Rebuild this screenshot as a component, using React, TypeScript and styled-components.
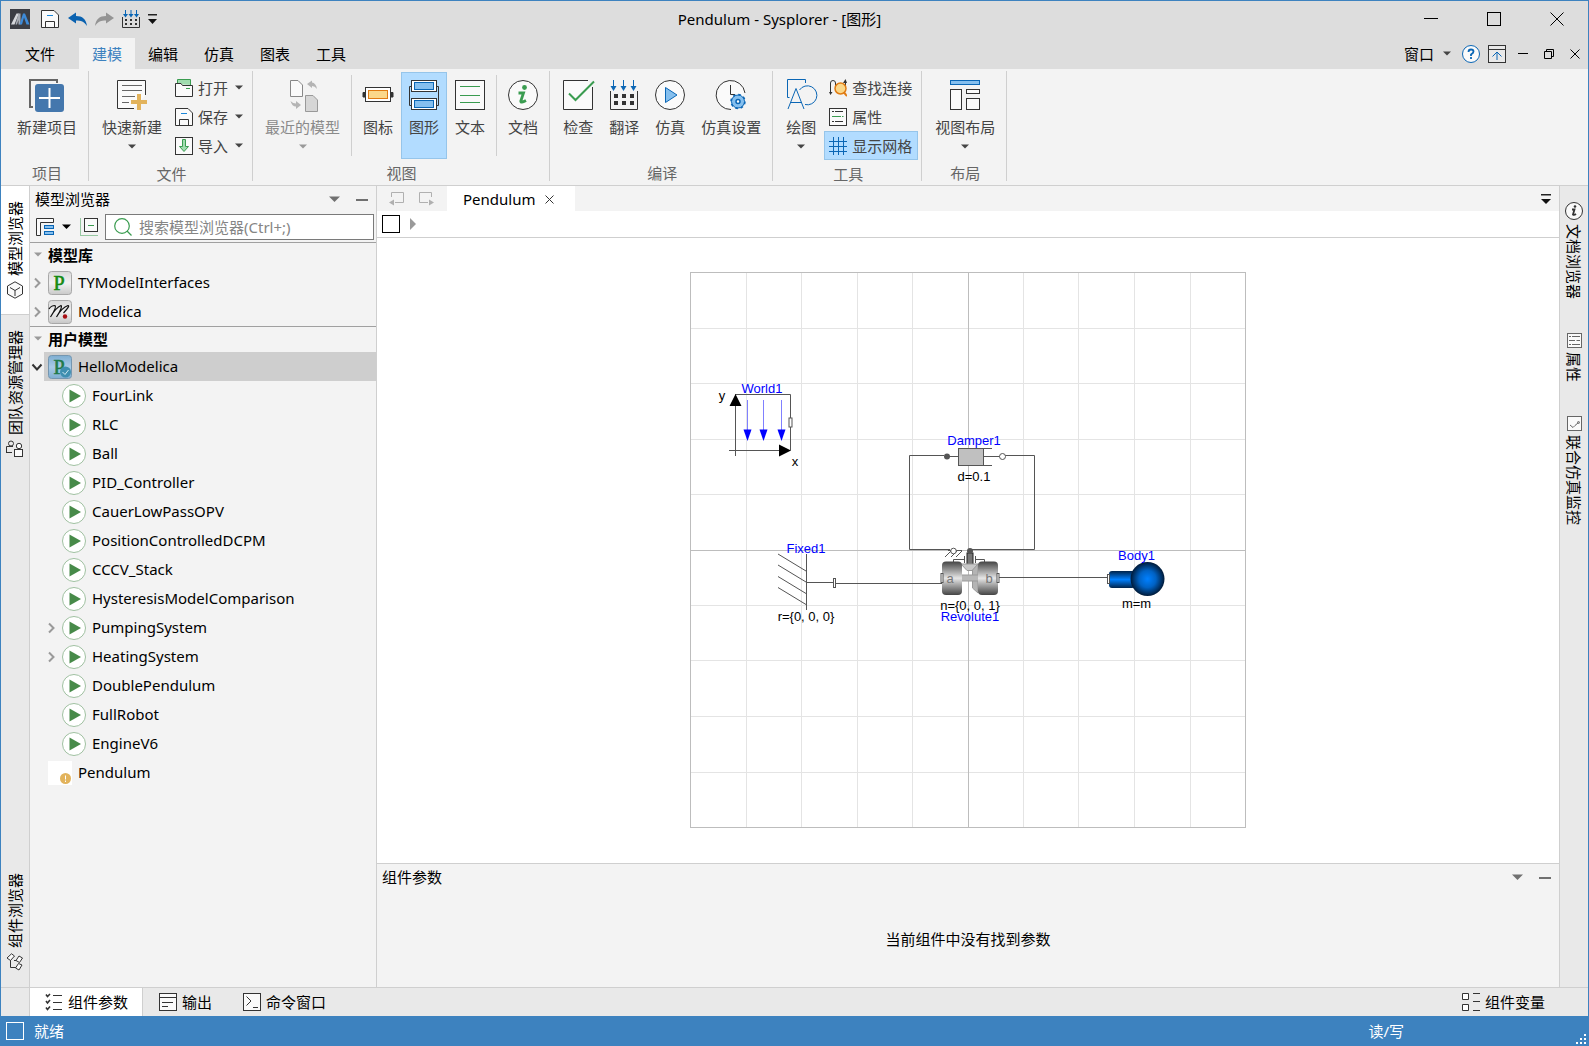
import React from 'react';
import styled, { createGlobalStyle, css } from 'styled-components';

const C = {
  accent: '#3d82bf',
  title: '#dddddd',
  panel: '#f3f3f3',
  rail: '#e9e9e9',
  line: '#cfcfcf',
  hot: '#b2dcff',
  hotLine: '#96c5ea',
  ink: '#333333',
  blue: '#0a66b5',
  sky: '#85bfee',
  green: '#3a9c50',
};

const Global = createGlobalStyle`
  * { box-sizing: border-box; }
  html, body, #root { height: 100%; }
  body { margin: 0; overflow: hidden; }
  body, button, input {
    font-family: "Noto Sans", "Noto Sans CJK SC", sans-serif;
    font-size: 15px;
    line-height: 20px;
    color: #000;
  }
  button { margin: 0; padding: 0; border: 0; background: none; white-space: nowrap; }
  svg { display: block; flex: none; }
  ul { list-style: none; margin: 0; padding: 0; }
`;

/* ---------- shell ---------- */
const Window = styled.div`
  height: 100vh;
  display: flex;
  flex-direction: column;
  border: solid ${C.accent};
  border-width: 1px 1px 0;
  background: ${C.panel};
`;
const TitleBar = styled.header`
  display: flex;
  height: 37px;
  background: ${C.title};
`;
const QuickBar = styled.div`
  width: 159px;
  padding: 0 0 1px 9px;
  display: flex;
  align-items: center;
  gap: 8px;
`;
const QuickButton = styled.button<{ $gap?: number }>`
  margin-left: ${(p) => p.$gap ?? 0}px;
`;
const Title = styled.h1`
  flex: 1;
  margin: 0;
  font-size: 15px;
  font-weight: 400;
  line-height: 37px;
  text-align: center;
`;
const WindowButton = styled.button`
  width: 63px;
  padding-bottom: 2px;
  display: grid;
  place-items: center;
`;
const MenuBar = styled.nav`
  display: flex;
  height: 31px;
  background: ${C.title};
`;
const MenuTab = styled.button<{ $active?: boolean; $wide?: boolean }>`
  padding: 0 ${(p) => (p.$wide ? 24 : 13)}px;
  height: 31px;
  color: ${(p) => (p.$active ? C.accent : '#000')};
  background: ${(p) => (p.$active ? C.panel : 'none')};
`;
const MenuRight = styled.div`
  margin-left: auto;
  padding-right: 4px;
  display: flex;
  align-items: center;
  gap: 8px;
`;
const MenuDrop = styled.button`
  display: flex;
  align-items: center;
  gap: 9px;
  padding: 0 3px;
`;
const DocButton = styled.button`
  width: 18px;
  display: grid;
  place-items: center;
`;

/* ---------- ribbon ---------- */
const Ribbon = styled.div`
  display: flex;
  height: 117px;
  padding: 2px 0 4px 3px;
  border-bottom: 1px solid ${C.line};
`;
const Group = styled.section`
  display: flex;
  flex-direction: column;
  padding: 1px 3px 0 5px;
  border-right: 1px solid ${C.line};
  & + & + & { padding-left: 4px; }
  & + & + & + & { padding-left: 5px; }
`;
const GroupBody = styled.div`
  display: flex;
  height: 88px;
`;
const GroupName = styled.h2`
  margin: 0;
  padding-top: 4px;
  font-size: 15px;
  font-weight: 400;
  text-align: center;
  color: #666;
`;
const hot = css`
  background: ${C.hot};
  border-color: ${C.hotLine};
`;
const BigButton = styled.button<{ $on?: boolean }>`
  height: 87px;
  padding: 5px 7px 0;
  border: 1px solid transparent;
  display: flex;
  flex-direction: column;
  align-items: center;
  color: #444;
  ${(p) => p.$on && hot}
  &:disabled { color: #8a8a8a; }
  & > svg:first-child { margin: 0 -3px; }
`;
const BigLabel = styled.span`
  margin: 3px 0 7px;
  white-space: nowrap;
`;
const Stack = styled.div`
  display: flex;
  flex-direction: column;
  padding-top: 1px;
`;
const SmallButton = styled.button<{ $on?: boolean }>`
  height: 29px;
  padding: 0 5px 0 4px;
  border: 1px solid transparent;
  display: flex;
  align-items: center;
  gap: 5px;
  color: #444;
  ${(p) => p.$on && hot}
  & > span + svg { margin-left: 2px; }
`;
const InnerLine = styled.div`
  width: 1px;
  height: 81px;
  margin: 3px 3px 0;
  background: ${C.line};
`;

/* ---------- work area ---------- */
const Work = styled.div`
  flex: 1;
  min-height: 0;
  display: grid;
  grid-template-columns: 29px 347px minmax(0, 1fr) 29px;
`;
const Rail = styled.nav<{ $right?: boolean }>`
  display: flex;
  flex-direction: column;
  background: ${C.rail};
  border: solid ${C.line};
  border-width: ${(p) => (p.$right ? '0 0 0 1px' : '0 1px 0 0')};
`;
const RailTab = styled.button<{ $active?: boolean; $end?: boolean }>`
  display: flex;
  flex-direction: column;
  align-items: center;
  gap: 5px;
  padding: 15px 0;
  margin-top: ${(p) => (p.$end ? 'auto' : '0')};
  background: ${(p) => (p.$active ? '#fff' : 'none')};
  border-bottom: 1px solid ${(p) => (p.$active ? C.line : 'transparent')};
`;
const SideText = styled.span<{ $up?: boolean }>`
  writing-mode: vertical-rl;
  text-orientation: sideways;
  ${(p) => p.$up && 'transform: rotate(180deg);'}
`;
const RightTab = styled(RailTab)`
  gap: 4px;
  padding: 16px 0 17px;
`;

const Side = styled.aside`
  display: flex;
  flex-direction: column;
  min-height: 0;
  border-right: 1px solid ${C.line};
`;
const PaneHead = styled.div`
  display: flex;
  align-items: center;
  height: 28px;
  padding: 0 8px 1px 5px;
`;
const PaneTitle = styled.h2`
  flex: 1;
  margin: 0;
  padding-bottom: 1px;
  font-size: 15px;
  font-weight: 400;
`;
const PaneButton = styled.button`
  width: 20px;
  height: 20px;
  display: grid;
  place-items: center;
  &:last-child { width: 24px; justify-items: end; }
`;
const SideTools = styled.div`
  display: flex;
  align-items: center;
  gap: 7px;
  height: 29px;
  padding: 0 2px 3px 6px;
  border-bottom: 1px solid #a0a0a0;
`;
const ToolDrop = styled.button`
  display: flex;
  align-items: center;
  gap: 8px;
  margin-right: 2px;
`;
const SearchBox = styled.label`
  flex: 1;
  min-width: 0;
  height: 26px;
  display: flex;
  align-items: center;
  gap: 7px;
  padding-left: 8px;
  background: #fff;
  border: 1px solid #7a7a7a;
`;
const SearchInput = styled.input`
  flex: 1;
  min-width: 0;
  padding: 0;
  border: 0;
  outline: 0;
  background: none;
  &::placeholder { color: #858585; opacity: 1; }
`;
const Section = styled.section`
  & + & { border-top: 1px solid #a0a0a0; }
`;
const SectionName = styled.h3`
  display: flex;
  align-items: center;
  gap: 6px;
  height: 25px;
  margin: 0;
  padding: 0 0 2px 4px;
  font-size: 15px;
  font-weight: 700;
`;
const Row = styled.li<{ $depth: number; $selected?: boolean }>`
  display: flex;
  align-items: center;
  height: 29px;
  padding-left: ${(p) => p.$depth * 14}px;
  background: ${(p) =>
    p.$selected ? 'linear-gradient(90deg, transparent 14px, #cecece 14px)' : 'none'};
`;
const Twist = styled.span`
  width: 14px;
  margin-right: 4px;
  display: grid;
  place-items: center;
`;
const RowButton = styled.button`
  display: flex;
  align-items: center;
  gap: 6px;
`;
const RowName = styled.span`
  padding-bottom: 2px;
`;

/* ---------- editor ---------- */
const Editor = styled.main`
  min-width: 0;
  display: flex;
  flex-direction: column;
  background: #fff;
`;
const TabStrip = styled.div`
  display: flex;
  align-items: center;
  height: 25px;
  padding: 0 8px 0 10px;
  gap: 12px;
  background: ${C.panel};
`;
const NavButton = styled.button`
  width: 18px;
  display: grid;
  place-items: center;
`;
const DocTab = styled.div`
  display: flex;
  align-items: center;
  align-self: stretch;
  gap: 10px;
  padding: 0 21px 0 16px;
  background: #fff;
`;
const CloseTab = styled.button`
  padding-top: 2px;
`;
const Push = styled.button`
  margin-left: auto;
`;
const Crumbs = styled.div`
  display: flex;
  align-items: center;
  gap: 10px;
  height: 27px;
  padding: 0 5px;
  border-bottom: 1px solid ${C.line};
`;
const Canvas = styled.div`
  flex: 1;
  min-height: 0;
  display: flex;
  align-items: center;
  justify-content: center;
  overflow: hidden;
`;
const Params = styled.section`
  height: 124px;
  display: flex;
  flex-direction: column;
  border-top: 1px solid ${C.line};
  background: ${C.panel};
`;
const Empty = styled.p`
  flex: 1;
  margin: 0;
  padding-bottom: 2px;
  display: grid;
  place-items: center;
`;

/* ---------- bottom ---------- */
const Bottom = styled.nav`
  display: flex;
  height: 29px;
  padding: 0 28px 0 29px;
  background: linear-gradient(${C.line}, ${C.line}) 28px 0 / 1px 100% no-repeat ${C.rail};
  border-top: 1px solid ${C.line};
`;
const BottomTab = styled.button<{ $active?: boolean; $end?: boolean }>`
  display: flex;
  align-items: center;
  gap: 5px;
  padding: 0 14px 0 15px;
  margin-left: ${(p) => (p.$end ? 'auto' : '0')};
  background: ${(p) => (p.$active ? '#fff' : 'none')};
  border-right: 1px solid ${(p) => (p.$active ? C.line : 'transparent')};
  & + & { padding-left: 16px; }
`;
const Status = styled.footer`
  display: flex;
  align-items: center;
  gap: 10px;
  height: 30px;
  padding: 0 2px 0 5px;
  color: #fff;
  background: ${C.accent};
`;
const Access = styled.span`
  margin-left: auto;
  margin-right: 162px;
`;
const GripBox = styled.span`
  align-self: flex-end;
  padding-bottom: 2px;
`;

/* ---------- icons ---------- */
type IconProps = { w?: number; h?: number; children: React.ReactNode };
const Icon = ({ w = 18, h = w, children }: IconProps) => (
  <svg width={w} height={h} viewBox={`0 0 ${w} ${h}`} fill="none" stroke={C.ink} aria-hidden="true">
    {children}
  </svg>
);
const Caret = ({ color = '#333', w = 8 }: { color?: string; w?: number }) => (
  <Icon w={w} h={Math.ceil(w / 2) + 1}>
    <path d={`M0 0.500H${w}L${w / 2} ${w / 2 + 0.5}Z`} fill={color} stroke="none" />
  </Icon>
);
const Dash = ({ w = 12, h = 2, color = '#707070' }) => (
  <Icon w={w} h={h}><rect width={w} height={h} fill={color} stroke="none" /></Icon>
);

const Logo = () => (
  <Icon w={20}>
    <rect width="20" height="20" fill="#3b3d44" stroke="none" />
    <path d="M1 15.500L6.500 4.500H9L4.500 15.500Z" fill="#d4d6da" stroke="none" />
    <path d="M5.500 15.500L8.500 4.500H10.500V15.500H8.500V11L7 15.500Z" fill="#a9aeb6" stroke="none" />
    <path d="M9.500 15.500L13 4.500H15L19.500 15.500H16.500L14 8.500L12 15.500Z" fill="#3d8ad8" stroke="none" />
  </Icon>
);
const SaveIcon = () => (
  <Icon>
    <path d="M.5 .5H13L17.500 5V17.500H.5Z" fill="#fafafa" />
    <path d="M4.500 17.500V11.500H13.500V17.500" />
    <path d="M6 5.500H12" stroke="#1b86d8" />
  </Icon>
);
const UndoIcon = () => (
  <Icon w={19} h={18}>
    <path d="M0 8L8 2.500V6C14.500 6 18 9 19 16C16 11.500 13 10.500 8 10.500V13.500Z" fill="#0a62b0" stroke="none" />
  </Icon>
);
const RedoIcon = () => (
  <Icon w={19} h={18}>
    <path d="M19 8L11 2.500V6C4.500 6 1 9 0 16C3 11.500 6 10.500 11 10.500V13.500Z" fill="#949494" stroke="none" />
  </Icon>
);
const QuickTranslateIcon = () => (
  <Icon>
    {[3.5, 9, 14.5].map((x) => (
      <g key={x}>
        <path d={`M${x} 0V6`} stroke={C.blue} />
        <path d={`M${x - 2.5} 4H${x + 2.5}L${x} 7.500Z`} fill={C.blue} stroke="none" />
      </g>
    ))}
    <path d="M.5 7V17.500H17.500V7" />
    {[3, 8, 13].map((x) => [9, 13].map((y) => (
      <rect key={`${x}${y}`} x={x} y={y} width="2" height="2" fill={C.ink} stroke="none" />
    )))}
  </Icon>
);
const MoreIcon = ({ w = 9 }) => (
  <Icon w={w} h={12}>
    <rect y="1" width={w} height="1.500" fill="#222" stroke="none" />
    <path d={`M0 6H${w}L${w / 2} 11Z`} fill="#111" stroke="none" />
  </Icon>
);

const NewProjectIcon = () => (
  <Icon w={36}>
    <path d="M4 29H1V2H28V5" stroke="#666" strokeWidth="2" />
    <rect x="6" y="6" width="29" height="28" rx="3" fill="#4477ad" stroke="none" />
    <path d="M20.500 10V30M10 20H31" stroke="#fff" strokeWidth="2" />
  </Icon>
);
const QuickNewIcon = () => (
  <Icon w={36}>
    <path d="M31.500 17V2.500H3.500V30.500H20" fill="#fafafa" />
    <path d="M8 7.500H28M8 12.500H28M8 18.500H21M8 24.500H15" stroke="#666" />
    <path d="M25 16V32M17 24H33" stroke="#e2b35c" strokeWidth="4" />
  </Icon>
);
const RecentIcon = () => (
  <Icon w={36}>
    <path d="M5.500 2.500H13L17.500 7V18.500H5.500Z" fill="#fafafa" stroke="#888" />
    <path d="M20.500 17.500H28L32.500 22V33.500H20.500Z" fill="#d6d6d6" stroke="#999" />
    <path d="M22 6L27 2.500V4.500Q31 5 32 11Q30 8 27 8V10Z" fill="#b4b4b4" stroke="none" />
    <path d="M16 27L11 31V28.500Q7 28.500 5.500 23Q8 25.500 11 25.500V23Z" fill="#b4b4b4" stroke="none" />
  </Icon>
);
const IconViewIcon = () => (
  <Icon w={36}>
    <path d="M3 14.500H5V19H3ZM31 14.500H33V19H31Z" fill={C.ink} />
    <rect x="5.500" y="9.500" width="25" height="14" fill="#fff" />
    <rect x="8.500" y="12.500" width="19" height="8" fill="#fbd88a" stroke="#e07b12" />
  </Icon>
);
const DiagramIcon = () => (
  <Icon w={36}>
    <path d="M5 8.500H3.500V27.500H5M31 8.500H32.500V27.500H31" />
    <rect x="5.500" y="2.500" width="25" height="11" fill="#fff" />
    <rect x="8.500" y="4.500" width="19" height="7" fill={C.sky} stroke={C.blue} />
    <rect x="5.500" y="20.500" width="25" height="11" fill="#fff" />
    <rect x="8.500" y="22.500" width="19" height="7" fill={C.sky} stroke={C.blue} />
  </Icon>
);
const TextIcon = () => (
  <Icon w={36}>
    <rect x="3.500" y="2.500" width="29" height="29" fill="#fafafa" />
    <path d="M8 8.500H28M8 17.500H28M8 24.500H28" stroke={C.green} />
  </Icon>
);
const DocIcon = () => (
  <Icon w={36}>
    <circle cx="18" cy="17" r="14.500" fill="#fafafa" />
    <circle cx="19.500" cy="9.500" r="2.400" fill={C.green} stroke="none" />
    <path d="M13.500 15H18.500L15.800 23Q15.500 25.500 21 22.500" stroke={C.green} strokeWidth="2.800" />
  </Icon>
);
const CheckIcon = () => (
  <Icon w={36}>
    <path d="M28 2.500H3.500V31.500H32.500V9" fill="#fafafa" />
    <path d="M9 15.500L15.500 22L34 3.500" stroke={C.green} strokeWidth="2" />
  </Icon>
);
const TranslateIcon = () => (
  <Icon w={36}>
    {[7.5, 17.5, 27.5].map((x) => (
      <g key={x}>
        <path d={`M${x} 2V10`} stroke={C.blue} />
        <path d={`M${x - 3} 8H${x + 3}L${x} 13Z`} fill={C.blue} stroke="none" />
      </g>
    ))}
    <path d="M4.500 13V31.500H31.500V13" />
    {[8, 16, 24].map((x) => [16, 23].map((y) => (
      <rect key={`${x}${y}`} x={x} y={y} width="4" height="4" fill={C.ink} stroke="none" />
    )))}
  </Icon>
);
const SimulateIcon = () => (
  <Icon w={36}>
    <circle cx="18" cy="17" r="14.500" fill="#fafafa" />
    <path d="M13.500 9.500L25 17L13.500 24.500Z" fill={C.sky} stroke={C.blue} />
  </Icon>
);
const SimSettingsIcon = () => (
  <Icon w={36}>
    <path d="M32 15A14.500 14.500 0 1 0 18 31.500" fill="#fafafa" />
    <path d="M17.500 7V16.500H22" />
    <circle cx="25" cy="23.500" r="6.500" fill={C.sky} stroke={C.blue} />
    <circle cx="25" cy="23.500" r="7" stroke={C.blue} strokeWidth="1.500" strokeDasharray="2.750 2.750" />
    <circle cx="25" cy="23.500" r="2" fill="#fff" stroke={C.blue} strokeWidth="1.500" />
  </Icon>
);
const DrawIcon = () => (
  <Icon w={36}>
    <g stroke={C.blue}>
      <path d="M6.500 19.500H4.500V1.500H22.500V5" />
      <path d="M16.500 12A9.500 9.500 0 1 1 22 26.500" />
      <path d="M5 31L13 10.500L21 31M8 24.500H18.500" />
    </g>
  </Icon>
);
const LayoutIcon = () => (
  <Icon w={36}>
    <rect x="3.500" y="2.500" width="29" height="4" fill={C.sky} stroke={C.blue} />
    <rect x="3.500" y="11.500" width="11" height="20" fill="#fafafa" />
    <rect x="19.500" y="11.500" width="13" height="4" fill="#fafafa" />
    <rect x="19.500" y="20.500" width="13" height="11" fill="#fafafa" />
  </Icon>
);
const OpenIcon = () => (
  <Icon>
    <path d="M2.500 5V.5H15.500V6" fill="#9fdcae" stroke={C.green} />
    <path d="M.5 4.500H6L7.500 6.500H17.500V17.500H.5Z" fill="#fafafa" />
    <path d="M11 9.500H15" stroke={C.green} />
  </Icon>
);
const ImportIcon = () => (
  <Icon>
    <rect x=".5" y=".5" width="17" height="17" fill="#fafafa" />
    <path d="M7.500 2.500H10.500V9.500H13.500L9 14.500L4.500 9.500H7.500Z" fill="#9fdcae" stroke={C.green} />
  </Icon>
);
const FindIcon = () => (
  <Icon>
    <path d="M1.500 14V4Q1.500 1.500 4 1.500Q6.500 1.500 6.500 4V12M16.500 3V9" />
    <path d="M0 13H3.500L1.500 16ZM14 4L16.500 0L18 4Z" fill={C.ink} stroke="none" />
    <circle cx="11.500" cy="9.500" r="5.500" fill="#fbd88a" stroke="#e07b12" strokeWidth="1.500" />
    <path d="M15 13.500L18 17" stroke="#e07b12" strokeWidth="2" />
  </Icon>
);
const PropIcon = () => (
  <Icon>
    <rect x=".5" y=".5" width="17" height="17" fill="#fafafa" />
    <path d="M3 3.500H5M6 3.500H14M3 13.500H5M6 13.500H14" />
    <path d="M3 8.500H12M13 8.500H14.500" stroke={C.green} />
  </Icon>
);
const GridIcon = () => (
  <Icon>
    <path d="M4.500 0V18M9.500 0V18M14.500 0V18M0 4.500H18M0 9.500H18M0 14.500H18" stroke={C.blue} />
  </Icon>
);

const TreeModeIcon = () => (
  <Icon>
    <path d="M.5 17.500V.5H17.500V4.500H4.500V17.500Z" fill="#fafafa" />
    <rect x="8.500" y="7.500" width="9" height="3" fill={C.sky} stroke={C.blue} />
    <rect x="8.500" y="13.500" width="9" height="3" fill={C.sky} stroke={C.blue} />
  </Icon>
);
const CollapseIcon = () => (
  <Icon>
    <path d="M.5 .5V17.500H18" stroke={C.green} strokeDasharray="1 1" />
    <rect x="4.500" y=".5" width="13" height="13" fill="#fafafa" />
    <path d="M8 7.500H14" stroke={C.green} />
  </Icon>
);
const SearchIcon = () => (
  <Icon>
    <circle cx="8" cy="8" r="7.300" stroke={C.green} strokeWidth="1.200" />
    <path d="M13 13L17.500 17.500" stroke={C.green} strokeWidth="1.200" />
  </Icon>
);
const Chevron = ({ open }: { open?: boolean }) => (
  <Icon w={12}>
    {open
      ? <path d="M1.500 3.500L6 8.500L10.500 3.500" stroke="#333" strokeWidth="2" />
      : <path d="M4 1.500L8.500 6L4 10.500" stroke="#9a9a9a" strokeWidth="2" />}
  </Icon>
);
const PackageIcon = ({ user }: { user?: boolean }) => (
  <Icon w={24}>
    <defs>
      <linearGradient id={user ? 'pkUser' : 'pkLib'} x1="0" y1="0" x2="0" y2="1">
        <stop offset="0" stopColor={user ? '#7eaed2' : '#dadada'} />
        <stop offset=".5" stopColor={user ? '#a9cbe6' : '#f1f1f1'} />
        <stop offset="1" stopColor={user ? '#7eaed2' : '#c9c9c9'} />
      </linearGradient>
    </defs>
    <rect x=".5" y=".5" width="23" height="23" rx="3" fill={`url(#${user ? 'pkUser' : 'pkLib'})`} stroke={user ? '#7596b0' : '#a8a8a8'} />
    <text x="11" y="19" textAnchor="middle" fontFamily="Liberation Serif, serif" fontSize="20" fontWeight="400" fill={user ? '#1f7a4a' : '#128a12'} stroke={user ? '#1f7a4a' : '#128a12'} strokeWidth=".6">P</text>
    {user && (
      <>
        <circle cx="17.500" cy="17" r="5.500" fill="#3f8fb0" stroke="none" />
        <path d="M14.500 17L17 19.500L20.500 15" stroke="#cfe8f2" />
      </>
    )}
  </Icon>
);
const ModelicaIcon = () => (
  <Icon w={24}>
    <defs>
      <linearGradient id="mdLib" x1="0" y1="0" x2="0" y2="1">
        <stop offset="0" stopColor="#d8d8d8" />
        <stop offset=".5" stopColor="#f1f1f1" />
        <stop offset="1" stopColor="#c6c6c6" />
      </linearGradient>
    </defs>
    <rect x=".5" y=".5" width="23" height="23" rx="3" fill="url(#mdLib)" stroke="#a8a8a8" />
    <path d="M1 9Q3 5.500 7 5.500Q9 7 2.500 17Q8 7.500 13 5.500Q15 6.500 8.500 17Q14 7.500 20 5.500Q22.500 5.500 15.500 13" stroke="#111" strokeWidth="1.200" />
    <circle cx="17" cy="16.500" r="2.200" fill="#a80f14" stroke="none" />
  </Icon>
);
const ModelIcon = () => (
  <Icon w={24}>
    <circle cx="12" cy="12" r="11.500" fill="#fff" stroke="#9fc0a0" />
    <path d="M7.500 5.500L19 12L7.500 18.500Z" fill="#478a49" stroke="none" />
  </Icon>
);
const PendingIcon = () => (
  <Icon w={24}>
    <rect width="24" height="24" fill="#fff" stroke="none" />
    <circle cx="17.500" cy="17.500" r="5.500" fill="#e2b35c" stroke="none" />
    <path d="M17.500 14.500V18.500M17.500 19.500V21" stroke="#fff" />
  </Icon>
);

const CubeIcon = () => (
  <Icon>
    <path d="M9 .8L16.500 5V13L9 17.200L1.500 13V5Z" fill="#fafafa" />
    <path d="M4 6.500L9 9.500L14 6.500M9 9.500V15" />
  </Icon>
);
const TeamIcon = () => (
  <Icon>
    <circle cx="5" cy="3.500" r="2.500" /><path d="M.5 13V6.500H7M.5 12.500H6" />
    <circle cx="13" cy="6" r="2.700" fill="#fafafa" /><rect x="8.500" y="9.500" width="8" height="7" fill="#fafafa" />
  </Icon>
);
const ComponentsIcon = () => (
  <Icon>
    <path d="M4.500 6V14.500H10M8 7.500H11" />
    <path d="M5.500 .8L8.500 3L4.500 7.500L1 5ZM13 3L16.500 5L13.500 9.500L10 7.500ZM12.500 10.500L16 12L13 17L9.500 15Z" fill="#fafafa" />
  </Icon>
);
const InfoIcon = () => (
  <Icon>
    <circle cx="9" cy="9" r="8.500" fill="#fafafa" />
    <circle cx="10" cy="4.500" r="1.300" fill={C.ink} stroke="none" />
    <path d="M7 7.500H9.500L8 12.500Q9 13.500 11 12" strokeWidth="1.800" />
  </Icon>
);
const PropSideIcon = () => (
  <Icon w={15}>
    <rect x=".5" y=".5" width="14" height="14" fill="#fafafa" stroke="#666" />
    <path d="M2 3.500H4M5 3.500H13M2 7.500H8M9.500 7.500H13M2 11.500H4M5 11.500H13" stroke="#666" />
  </Icon>
);
const MonitorIcon = () => (
  <Icon w={15}>
    <rect x=".5" y=".5" width="14" height="14" fill="#fafafa" stroke="#666" />
    <path d="M3 9L6 11.500L8 9.500L11.500 6.500" stroke="#666" />
    <circle cx="11.500" cy="6.500" r="1" stroke="#666" />
  </Icon>
);
const ListIcon = () => (
  <Icon>
    <path d="M8 2.500H17M8 9.500H17M8 16.500H17" />
    <path d="M1 1.500L2.500 3.500L5 1M1 8L2.500 10L5 7M1 14.500L2.500 16.500L5 13.500" strokeWidth="1.600" />
  </Icon>
);
const OutputIcon = () => (
  <Icon>
    <rect x=".5" y=".5" width="17" height="17" fill="#fafafa" />
    <path d="M0 4.500H18M3 9.500H14M3 13.500H9" />
  </Icon>
);
const ConsoleIcon = () => (
  <Icon>
    <rect x=".5" y=".5" width="17" height="17" fill="#fafafa" />
    <path d="M3.500 3.500L8 8L3.500 12.500M10 14.500H15" />
  </Icon>
);
const VarsIcon = () => (
  <Icon>
    <path d="M.5 .5H6.500V6.500H.5ZM.5 11.500H6.500V17.500H.5Z" fill="#fff" />
    <path d="M11 .5H18M11 8.500H18M11 17.500H18" />
  </Icon>
);
const NavIcon = ({ forward }: { forward?: boolean }) => (
  <Icon w={15}>
    <g stroke="#b0b0b0" transform={forward ? 'translate(15 0) scale(-1 1)' : undefined}>
      <path d="M2.500 6V1.500H14.500V11.500H6" />
      <path d="M5 8.500V14.500L0 11.500Z" fill="#b0b0b0" stroke="none" />
    </g>
  </Icon>
);
const CloseIcon = ({ w = 10, color = '#000' }) => (
  <Icon w={w}><path d={`M.5 .5L${w - 0.5} ${w - 0.5}M${w - 0.5} .5L.5 ${w - 0.5}`} stroke={color} /></Icon>
);
const HelpIcon = () => (
  <Icon>
    <circle cx="9" cy="9" r="8.500" fill="#fafafa" stroke={C.blue} />
    <path d="M6.500 7Q6.500 4.500 9 4.500Q11.500 4.500 11.500 6.500Q11.500 8 9 9.500V11" stroke={C.blue} strokeWidth="1.800" />
    <path d="M9 12V14" stroke={C.blue} strokeWidth="1.800" />
  </Icon>
);
const PinIcon = () => (
  <Icon>
    <rect x=".5" y=".5" width="17" height="17" fill="#e9e9e9" />
    <path d="M0 4.500H18" />
    <path d="M9 15V7.500M4.500 11.500L9 7L13.500 11.500" stroke={C.blue} />
  </Icon>
);

/* ---------- diagram ---------- */
const Sheet = styled.svg`
  font-family: "Liberation Sans", Arial, sans-serif;
  font-size: 13px;
  text { stroke: none; fill: #000; text-anchor: middle; }
  text.name { fill: #0000ff; }
  text.port { fill: #777; }
`;
const ticks = [56, 111, 167, 222, 333, 388, 444, 500];

const Diagram = () => (
  <Sheet width="556" height="557" viewBox="0 0 556 557" fill="none" stroke="#555" role="img" aria-label="Pendulum">
    <defs>
      <linearGradient id="steel" x1="0" y1="0" x2="0" y2="1">
        <stop offset="0" stopColor="#444" /><stop offset=".5" stopColor="#e6e6e6" /><stop offset="1" stopColor="#444" />
      </linearGradient>
      <linearGradient id="rod" x1="0" y1="0" x2="0" y2="1">
        <stop offset="0" stopColor="#00234a" /><stop offset=".5" stopColor="#0080ff" /><stop offset="1" stopColor="#00234a" />
      </linearGradient>
      <radialGradient id="ball">
        <stop offset="0" stopColor="#0080ff" /><stop offset=".5" stopColor="#0062c4" /><stop offset="1" stopColor="#001a38" />
      </radialGradient>
    </defs>
    {ticks.map((t) => <path key={t} d={`M${t + 0.5} 0V556M0 ${t + 0.5}H556`} stroke="#e4e4e4" />)}
    <path d="M278.500 0V556M0 278.500H556" stroke="#bdbdbd" />
    <rect x=".5" y=".5" width="555" height="555" stroke="#bdbdbd" />

    {/* World1 */}
    <path d="M45.500 122.500H100.500V178.500" />
    <path d="M45.500 122V184M39 178.500H100" />
    <path d="M45.500 122L51.500 134H39.500ZM101 178.500L89 172.500V184.500Z" fill="#000" stroke="none" />
    {[57.5, 73.5, 91.5].map((x) => (
      <g key={x}>
        <path d={`M${x} 128V160`} stroke="#8080ff" />
        <path d={`M${x - 4} 157.500H${x + 4}L${x} 169Z`} fill="#0000ff" stroke="none" />
      </g>
    ))}
    <rect x="99" y="146" width="3" height="9" fill="#fff" />
    <text className="name" x="72" y="121">World1</text>
    <text x="32" y="128">y</text>
    <text x="105" y="194">x</text>

    {/* Fixed1 */}
    <path d="M116.500 282V338M88 282L116 299M88 293L116 310M88 304.500L116 321.500M88 315.500L116 332.500M116 310.500H143" />
    <path d="M146 311.500H252" />
    <rect x="143.500" y="306.500" width="2" height="9" fill="#fff" />
    <text className="name" x="116" y="281">Fixed1</text>
    <text x="116" y="349">r={'{'}0, 0, 0{'}'}</text>

    {/* Damper1 */}
    <path d="M254 183.500H219.500V277.500H260M315 183.500H344.500V277.500H281" />
    <path d="M257 184.500H268M293 184.500H310M268 176.500H302M268 193.500H302" />
    <rect x="268.500" y="176.500" width="25" height="17" fill="#c0c0c0" />
    <circle cx="257" cy="184.500" r="3" fill="#555" stroke="none" />
    <circle cx="312.500" cy="184.500" r="3" fill="#fff" />
    <text className="name" x="284" y="173">Damper1</text>
    <text x="284" y="209">d=0.1</text>

    {/* Revolute1 */}
    <path d="M258 278.500H272M261 279L255 285M267 279L261 285M272 279L266 285" />
    <circle cx="263.500" cy="279" r="2.800" fill="#fff" />
    <path d="M263.500 290V287.500H274M274.500 284V291M285.500 284V291M286 287.500H294.500V290" />
    <rect x="277" y="281" width="6" height="12" fill="#777" stroke="#222" />
    <circle cx="280" cy="279" r="3" fill="#555" stroke="none" />
    <path d="M271 292H289L283 298.500H277Z" fill="#c8c8c8" stroke="#999" />
    <path d="M288 292V321L282.500 316V298Z" fill="#b4b4b4" stroke="#999" />
    <rect x="270" y="303" width="19" height="6" fill="#b8b8b8" stroke="#999" />
    <rect x="252" y="289.500" width="20" height="33.500" rx="4" fill="url(#steel)" stroke="none" />
    <rect x="288" y="289.500" width="20" height="33.500" rx="4" fill="url(#steel)" stroke="none" />
    <rect x="251" y="301.500" width="2" height="9" fill="#fff" />
    <rect x="307" y="301.500" width="2" height="9" fill="#fff" />
    <text className="port" x="260" y="311">a</text>
    <text className="port" x="299" y="311">b</text>
    <text x="280" y="338">n={'{'}0, 0, 1{'}'}</text>
    <text className="name" x="280" y="349">Revolute1</text>

    {/* Body1 */}
    <path d="M309 305.500H418" />
    <rect x="419" y="299" width="26" height="17" rx="3" fill="url(#rod)" stroke="none" />
    <circle cx="457.500" cy="307" r="17" fill="url(#ball)" stroke="none" />
    <rect x="417.500" y="302.500" width="2" height="9" fill="#fff" />
    <text className="name" x="446.500" y="288">Body1</text>
    <text x="446.500" y="336">m=m</text>
  </Sheet>
);

/* ---------- composed parts ---------- */
type BigProps = { icon: React.ReactNode; label: string; on?: boolean; drop?: boolean; disabled?: boolean };
const Big = ({ icon, label, on, drop, disabled }: BigProps) => (
  <BigButton $on={on} disabled={disabled}>
    {icon}
    <BigLabel>{label}</BigLabel>
    {drop && <Caret color={disabled ? '#999' : '#444'} />}
  </BigButton>
);
type SmallProps = { icon: React.ReactNode; label: string; on?: boolean; drop?: boolean };
const Small = ({ icon, label, on, drop }: SmallProps) => (
  <SmallButton $on={on}>
    {icon}
    <span>{label}</span>
    {drop && <Caret color="#444" />}
  </SmallButton>
);
type NodeProps = { name: string; icon: React.ReactNode; depth: number; twist?: 'open' | 'closed'; selected?: boolean };
const Node = ({ name, icon, depth, twist, selected }: NodeProps) => (
  <Row $depth={depth} $selected={selected}>
    <Twist>{twist && <Chevron open={twist === 'open'} />}</Twist>
    <RowButton>{icon}<RowName>{name}</RowName></RowButton>
  </Row>
);

const models = [
  'FourLink', 'RLC', 'Ball', 'PID_Controller', 'CauerLowPassOPV', 'PositionControlledDCPM', 'CCCV_Stack',
  'HysteresisModelComparison', 'PumpingSystem', 'HeatingSystem', 'DoublePendulum', 'FullRobot', 'EngineV6',
];
const folders = ['PumpingSystem', 'HeatingSystem'];

export default function App() {
  return (
    <Window lang="zh-CN">
      <Global />
      <TitleBar>
        <QuickBar>
          <Logo />
          <QuickButton $gap={3} aria-label="保存"><SaveIcon /></QuickButton>
          <QuickButton $gap={1} aria-label="撤销"><UndoIcon /></QuickButton>
          <QuickButton aria-label="重做"><RedoIcon /></QuickButton>
          <QuickButton aria-label="翻译"><QuickTranslateIcon /></QuickButton>
          <QuickButton aria-label="更多"><MoreIcon /></QuickButton>
        </QuickBar>
        <Title>Pendulum - Sysplorer - [图形]</Title>
        <WindowButton aria-label="最小化"><Dash w={14} h={1} color="#000" /></WindowButton>
        <WindowButton aria-label="最大化">
          <Icon w={14}><rect x=".5" y=".5" width="13" height="13" stroke="#000" /></Icon>
        </WindowButton>
        <WindowButton aria-label="关闭"><CloseIcon w={14} /></WindowButton>
      </TitleBar>

      <MenuBar>
        <MenuTab $wide>文件</MenuTab>
        <MenuTab $active>建模</MenuTab>
        {['编辑', '仿真', '图表', '工具'].map((m) => <MenuTab key={m}>{m}</MenuTab>)}
        <MenuRight>
          <MenuDrop>窗口 <Caret color="#444" /></MenuDrop>
          <DocButton aria-label="帮助"><HelpIcon /></DocButton>
          <DocButton aria-label="折叠功能区"><PinIcon /></DocButton>
          <DocButton aria-label="最小化文档"><Dash w={10} h={1} color="#000" /></DocButton>
          <DocButton aria-label="还原文档">
            <Icon w={10}><path d="M2.500 2.500V.5H9.500V7.500H7.500M.5 2.500H7.500V9.500H.5Z" stroke="#000" /></Icon>
          </DocButton>
          <DocButton aria-label="关闭文档"><CloseIcon /></DocButton>
        </MenuRight>
      </MenuBar>

      <Ribbon>
        <Group>
          <GroupBody><Big icon={<NewProjectIcon />} label="新建项目" /></GroupBody>
          <GroupName>项目</GroupName>
        </Group>
        <Group>
          <GroupBody>
            <Big icon={<QuickNewIcon />} label="快速新建" drop />
            <Stack>
              <Small icon={<OpenIcon />} label="打开" drop />
              <Small icon={<SaveIcon />} label="保存" drop />
              <Small icon={<ImportIcon />} label="导入" drop />
            </Stack>
          </GroupBody>
          <GroupName>文件</GroupName>
        </Group>
        <Group>
          <GroupBody>
            <Big icon={<RecentIcon />} label="最近的模型" drop disabled />
            <InnerLine />
            <Big icon={<IconViewIcon />} label="图标" />
            <Big icon={<DiagramIcon />} label="图形" on />
            <Big icon={<TextIcon />} label="文本" />
            <InnerLine />
            <Big icon={<DocIcon />} label="文档" />
          </GroupBody>
          <GroupName>视图</GroupName>
        </Group>
        <Group>
          <GroupBody>
            <Big icon={<CheckIcon />} label="检查" />
            <Big icon={<TranslateIcon />} label="翻译" />
            <Big icon={<SimulateIcon />} label="仿真" />
            <Big icon={<SimSettingsIcon />} label="仿真设置" />
          </GroupBody>
          <GroupName>编译</GroupName>
        </Group>
        <Group>
          <GroupBody>
            <Big icon={<DrawIcon />} label="绘图" drop />
            <Stack>
              <Small icon={<FindIcon />} label="查找连接" />
              <Small icon={<PropIcon />} label="属性" />
              <Small icon={<GridIcon />} label="显示网格" on />
            </Stack>
          </GroupBody>
          <GroupName>工具</GroupName>
        </Group>
        <Group>
          <GroupBody><Big icon={<LayoutIcon />} label="视图布局" drop /></GroupBody>
          <GroupName>布局</GroupName>
        </Group>
      </Ribbon>

      <Work>
        <Rail>
          <RailTab $active><SideText $up>模型浏览器</SideText><CubeIcon /></RailTab>
          <RailTab><SideText $up>团队资源管理器</SideText><TeamIcon /></RailTab>
          <RailTab $end><SideText $up>组件浏览器</SideText><ComponentsIcon /></RailTab>
        </Rail>

        <Side>
          <PaneHead>
            <PaneTitle>模型浏览器</PaneTitle>
            <PaneButton aria-label="面板菜单"><Caret w={11} color="#707070" /></PaneButton>
            <PaneButton aria-label="隐藏面板"><Dash /></PaneButton>
          </PaneHead>
          <SideTools>
            <ToolDrop aria-label="显示方式"><TreeModeIcon /><Caret w={9} color="#000" /></ToolDrop>
            <button aria-label="全部折叠"><CollapseIcon /></button>
            <SearchBox>
              <SearchIcon />
              <SearchInput type="text" aria-label="搜索模型浏览器" placeholder="搜索模型浏览器(Ctrl+;)" />
            </SearchBox>
          </SideTools>
          <Section>
            <SectionName><Caret color="#9a9a9a" />模型库</SectionName>
            <ul>
              <Node name="TYModelInterfaces" icon={<PackageIcon />} depth={0} twist="closed" />
              <Node name="Modelica" icon={<ModelicaIcon />} depth={0} twist="closed" />
            </ul>
          </Section>
          <Section>
            <SectionName><Caret color="#9a9a9a" />用户模型</SectionName>
            <ul>
              <Node name="HelloModelica" icon={<PackageIcon user />} depth={0} twist="open" selected />
              {models.map((m) => (
                <Node key={m} name={m} icon={<ModelIcon />} depth={1} twist={folders.includes(m) ? 'closed' : undefined} />
              ))}
              <Node name="Pendulum" icon={<PendingIcon />} depth={0} />
            </ul>
          </Section>
        </Side>

        <Editor>
          <TabStrip>
            <NavButton aria-label="后退"><NavIcon /></NavButton>
            <NavButton aria-label="前进"><NavIcon forward /></NavButton>
            <DocTab>
              Pendulum
              <CloseTab aria-label="关闭标签"><CloseIcon w={9} color="#333" /></CloseTab>
            </DocTab>
            <Push aria-label="标签列表"><MoreIcon w={10} /></Push>
          </TabStrip>
          <Crumbs>
            <Icon><rect x=".5" y=".5" width="17" height="17" fill="#fff" stroke="#000" /></Icon>
            <Icon w={7} h={12}><path d="M0 0L6 6L0 12Z" fill="#9a9a9a" stroke="none" /></Icon>
          </Crumbs>
          <Canvas><Diagram /></Canvas>
          <Params>
            <PaneHead>
              <PaneTitle>组件参数</PaneTitle>
              <PaneButton aria-label="面板菜单"><Caret w={11} color="#707070" /></PaneButton>
              <PaneButton aria-label="隐藏面板"><Dash /></PaneButton>
            </PaneHead>
            <Empty>当前组件中没有找到参数</Empty>
          </Params>
        </Editor>

        <Rail $right>
          <RightTab><InfoIcon /><SideText>文档浏览器</SideText></RightTab>
          <RightTab><PropSideIcon /><SideText>属性</SideText></RightTab>
          <RightTab><MonitorIcon /><SideText>联合仿真监控</SideText></RightTab>
        </Rail>
      </Work>

      <Bottom>
        <BottomTab $active><ListIcon />组件参数</BottomTab>
        <BottomTab><OutputIcon />输出</BottomTab>
        <BottomTab><ConsoleIcon />命令窗口</BottomTab>
        <BottomTab $end><VarsIcon />组件变量</BottomTab>
      </Bottom>
      <Status>
        <Icon><rect x=".5" y=".5" width="17" height="17" stroke="#fff" /></Icon>
        就绪
        <Access>读/写</Access>
        <GripBox>
          <Icon w={10}>
            <path d="M8 0H10V2H8ZM4 4H6V6H4ZM8 4H10V6H8ZM0 8H2V10H0ZM4 8H6V10H4ZM8 8H10V10H8Z" fill="#fff" stroke="none" />
          </Icon>
        </GripBox>
      </Status>
    </Window>
  );
}
